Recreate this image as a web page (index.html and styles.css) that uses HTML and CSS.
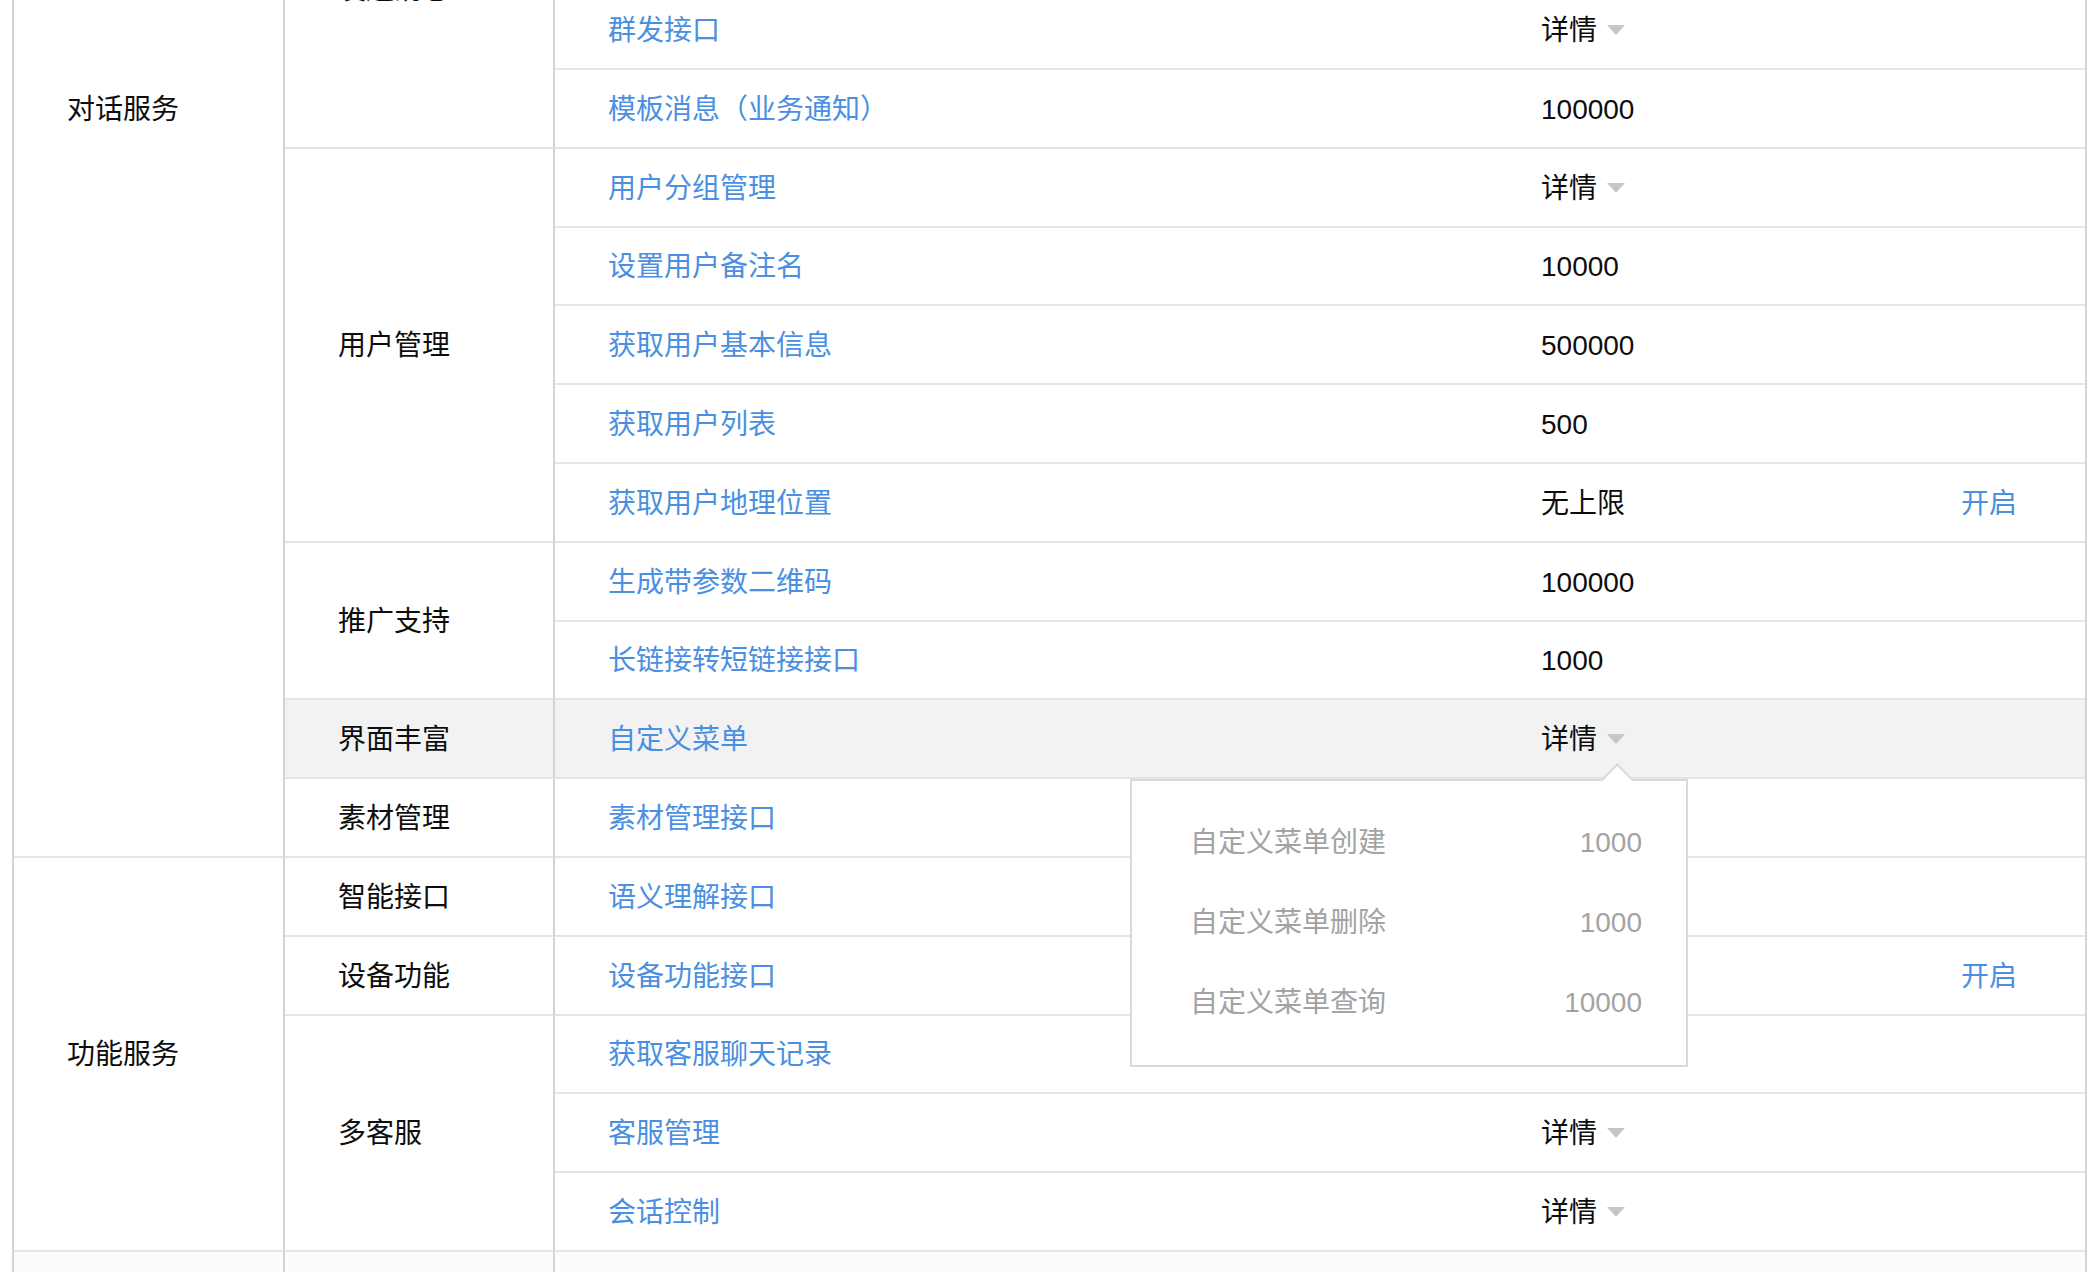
FILE: index.html
```html
<!DOCTYPE html>
<html lang="zh-CN">
<head>
<meta charset="utf-8">
<title>接口权限</title>
<link rel="stylesheet" href="styles.css">
</head>
<body>
<div class="page">
  <div class="table">
    <div class="cat cat-dialog"><span class="label">对话服务</span></div>
    <div class="grp grp-send"><span class="label clipped">发送消息</span></div>
    <div class="row"><span class="name">群发接口</span><span class="val"><span class="detail">详情<i class="caret"></i></span></span><span class="act"></span></div>
    <div class="row"><span class="name">模板消息（业务通知）</span><span class="val">100000</span><span class="act"></span></div>

    <div class="grp grp-user"><span class="label">用户管理</span></div>
    <div class="row"><span class="name">用户分组管理</span><span class="val"><span class="detail">详情<i class="caret"></i></span></span><span class="act"></span></div>
    <div class="row"><span class="name">设置用户备注名</span><span class="val">10000</span><span class="act"></span></div>
    <div class="row"><span class="name">获取用户基本信息</span><span class="val">500000</span><span class="act"></span></div>
    <div class="row"><span class="name">获取用户列表</span><span class="val">500</span><span class="act"></span></div>
    <div class="row"><span class="name">获取用户地理位置</span><span class="val">无上限</span><span class="act link">开启</span></div>

    <div class="grp grp-promo"><span class="label">推广支持</span></div>
    <div class="row"><span class="name">生成带参数二维码</span><span class="val">100000</span><span class="act"></span></div>
    <div class="row"><span class="name">长链接转短链接接口</span><span class="val">1000</span><span class="act"></span></div>

    <div class="grp hover"><span class="label">界面丰富</span></div>
    <div class="row hover open"><span class="name">自定义菜单</span><span class="val"><span class="detail">详情<i class="caret"></i></span></span><span class="act"></span>
      <div class="popup">
        <div class="pop-row"><span>自定义菜单创建</span><span>1000</span></div>
        <div class="pop-row"><span>自定义菜单删除</span><span>1000</span></div>
        <div class="pop-row"><span>自定义菜单查询</span><span>10000</span></div>
      </div>
    </div>

    <div class="grp"><span class="label">素材管理</span></div>
    <div class="row"><span class="name">素材管理接口</span><span class="val"></span><span class="act"></span></div>

    <div class="cat cat-func"><span class="label">功能服务</span></div>
    <div class="grp"><span class="label">智能接口</span></div>
    <div class="row"><span class="name">语义理解接口</span><span class="val"></span><span class="act"></span></div>
    <div class="grp"><span class="label">设备功能</span></div>
    <div class="row"><span class="name">设备功能接口</span><span class="val"></span><span class="act link">开启</span></div>
    <div class="grp grp-kf"><span class="label">多客服</span></div>
    <div class="row"><span class="name">获取客服聊天记录</span><span class="val"></span><span class="act"></span></div>
    <div class="row"><span class="name">客服管理</span><span class="val"><span class="detail">详情<i class="caret"></i></span></span><span class="act"></span></div>
    <div class="row"><span class="name">会话控制</span><span class="val"><span class="detail">详情<i class="caret"></i></span></span><span class="act"></span></div>

    <div class="tail tail-cat"></div>
    <div class="tail tail-grp"></div>
    <div class="tail tail-row"></div>
  </div>
</div>
</body>
</html>
```

FILE: styles.css
```css
html, body {
  margin: 0;
  padding: 0;
  background: #ffffff;
}

.page {
  height: 1272px;
  overflow: hidden;
  font-family: "Liberation Sans", "Noto Sans CJK SC", sans-serif;
  font-size: 28px;
  color: #0d0d0d;
}

.table {
  margin-top: -8.8px;
  margin-left: 12px;
  width: 2075px;
  box-sizing: border-box;
  border-left: 2px solid #d3d3d3;
  border-right: 2px solid #d3d3d3;
  display: grid;
  grid-template-columns: 271px 270px 1fr;
  grid-template-rows: repeat(16, 78.8px) 60px;
}

.cat,
.grp {
  box-sizing: border-box;
  border-right: 2px solid #d3d3d3;
  border-bottom: 2px solid #e4e4e4;
  padding-left: 53px;
  padding-top: 3px;
  display: flex;
  align-items: center;
  overflow: hidden;
}

.cat { grid-column: 1; }
.grp { grid-column: 2; }

.cat-dialog {
  grid-row: 1 / span 11;
  align-items: flex-start;
  padding-top: 104.5px;
}
.cat-func { grid-row: 12 / span 5; }

.grp-send {
  grid-row: 1 / span 2;
  align-items: flex-start;
  padding-top: 0;
}
.grp-user { grid-row: 3 / span 5; }
.grp-promo { grid-row: 8 / span 2; }
.grp-kf { grid-row: 14 / span 3; }

.label {
  line-height: 28px;
  white-space: nowrap;
}

.clipped {
  margin-top: -15px;
}

.row {
  grid-column: 3;
  position: relative;
  box-sizing: border-box;
  border-bottom: 2px solid #e4e4e4;
  display: grid;
  grid-template-columns: 933px 420px 1fr;
  align-items: center;
  padding-top: 3px;
}

.row > span {
  padding-left: 53px;
  white-space: nowrap;
  line-height: 28px;
}

.name { color: #4a8fe2; }
.link { color: #4a8fe2; }

.hover { background: #f2f2f2; }

.detail {
  display: inline-flex;
  align-items: center;
}

.caret {
  display: inline-block;
  width: 0;
  height: 0;
  margin-left: 10px;
  margin-top: -2px;
  border-left: 9.5px solid transparent;
  border-right: 9.5px solid transparent;
  border-top: 10px solid #c6c6c6;
}

.popup {
  position: absolute;
  left: 575px;
  top: calc(100% + 2px);
  width: 558px;
  box-sizing: border-box;
  background: #ffffff;
  border: 2px solid #d9d9d9;
  padding: 22px 44px 22px 58px;
  color: #a3a3a3;
  z-index: 5;
}

.popup::before {
  content: "";
  position: absolute;
  left: 473.7px;
  top: -13.3px;
  width: 22.6px;
  height: 22.6px;
  box-sizing: border-box;
  background: #ffffff;
  border-top: 2px solid #d9d9d9;
  border-left: 2px solid #d9d9d9;
  transform: rotate(45deg);
}

.pop-row {
  height: 80px;
  display: flex;
  justify-content: space-between;
  align-items: center;
  line-height: 28px;
  white-space: nowrap;
}

.tail {
  background: #fcfcfc;
  box-sizing: border-box;
}
.tail-cat { grid-column: 1; border-right: 2px solid #d3d3d3; }
.tail-grp { grid-column: 2; border-right: 2px solid #d3d3d3; }
.tail-row { grid-column: 3; }
```
